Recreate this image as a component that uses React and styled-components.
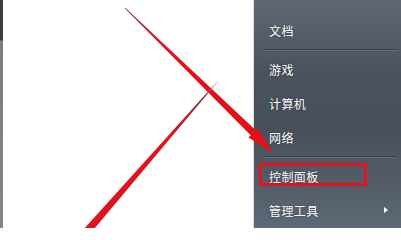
import React from 'react';
import styled, { createGlobalStyle } from 'styled-components';

const GlobalStyle = createGlobalStyle`
  html, body {
    margin: 0;
    padding: 0;
    background: #ffffff;
  }
  body {
    font-family: "Noto Sans CJK SC", "Noto Sans", sans-serif;
  }
`;

const Screen = styled.div`
  position: relative;
  width: 401px;
  height: 228px;
  display: flex;
  overflow: hidden;
  background: #ffffff;
`;

const Strip = styled.div`
  width: 3px;
  flex-shrink: 0;
  background: linear-gradient(180deg, #3c3c3c 0px, #3c3c3c 40px, #7d7d7d 41px, #858585 100%);
`;

const Blank = styled.div`
  flex: 1;
  background: #ffffff;
  border-right: 1px solid #d9dcdf;
`;

const Panel = styled.div`
  width: 147px;
  flex-shrink: 0;
  display: flex;
  flex-direction: column;
  padding-top: 13px;
  box-sizing: border-box;
  background: linear-gradient(180deg, #5f6874 0%, #4b535e 30%, #474f5a 55%, #535c68 80%, #5e6976 100%);
`;

const Item = styled.div`
  height: 34px;
  display: flex;
  align-items: center;
  padding-left: ${(p) => (p.marked ? '5px' : '15px')};
  padding-right: 13px;
  color: #ffffff;
  font-size: 12px;
  letter-spacing: 0.4px;
  text-shadow: 0 0 2px rgba(0, 0, 0, 0.45);
`;

const Label = styled.span`
  display: flex;
  align-items: center;
  ${(p) =>
    p.marked &&
    `
    box-sizing: border-box;
    width: 108px;
    height: 23px;
    margin-top: -3px;
    padding-left: 7px;
    padding-top: 3px;
    border: 3px solid #e3141f;
    border-radius: 1px;
  `}
`;

const Caret = styled.span`
  margin-left: auto;
  width: 0;
  height: 0;
  border-top: 3.5px solid transparent;
  border-bottom: 3.5px solid transparent;
  border-left: 4px solid #ffffff;
`;

const Separator = styled.div`
  height: 5px;
  display: flex;
  align-items: center;
  padding: 0 4px 0 9px;

  &::after {
    content: '';
    flex: 1;
    height: 0;
    border-top: 1px solid rgba(30, 36, 44, 0.45);
    border-bottom: 1px solid rgba(255, 255, 255, 0.12);
  }
`;

const Marks = styled.svg`
  position: absolute;
  left: 0;
  top: 0;
  pointer-events: none;
`;

const items = [
  { label: '文档', sepAfter: true },
  { label: '游戏' },
  { label: '计算机' },
  { label: '网络', sepAfter: true },
  { label: '控制面板', marked: true },
  { label: '管理工具', sub: true },
];

// red pointers drawn over the screenshot
function Arrows() {
  return (
    <Marks width="401" height="228" viewBox="0 0 401 228">
      <defs>
        <linearGradient id="a1" gradientUnits="userSpaceOnUse" x1="125" y1="8" x2="160" y2="42">
          <stop offset="0" stopColor="#6e3a4a" />
          <stop offset="1" stopColor="#e3101a" />
        </linearGradient>
        <linearGradient id="a2" gradientUnits="userSpaceOnUse" x1="218" y1="81" x2="170" y2="136">
          <stop offset="0" stopColor="#f3c0c8" />
          <stop offset="0.25" stopColor="#7a3040" />
          <stop offset="1" stopColor="#dd1420" />
        </linearGradient>
      </defs>
      <polygon
        points="124.7,8.3 125.3,7.7 257.1,131.4 251.9,136.6"
        fill="url(#a1)"
      />
      <polygon points="248.5,137.6 257.5,128.4 274,153.5" fill="#e3101a" />
      <polygon
        points="218.2,81.2 217.8,80.8 76.4,237.3 82.6,242.7"
        fill="url(#a2)"
      />
    </Marks>
  );
}

export default function App() {
  return (
    <>
      <GlobalStyle />
      <Screen>
        <Strip />
        <Blank />
        <Panel>
          {items.map((it) => (
            <React.Fragment key={it.label}>
              <Item marked={it.marked}>
                <Label marked={it.marked}>{it.label}</Label>
                {it.sub && <Caret />}
              </Item>
              {it.sepAfter && <Separator />}
            </React.Fragment>
          ))}
        </Panel>
        <Arrows />
      </Screen>
    </>
  );
}
